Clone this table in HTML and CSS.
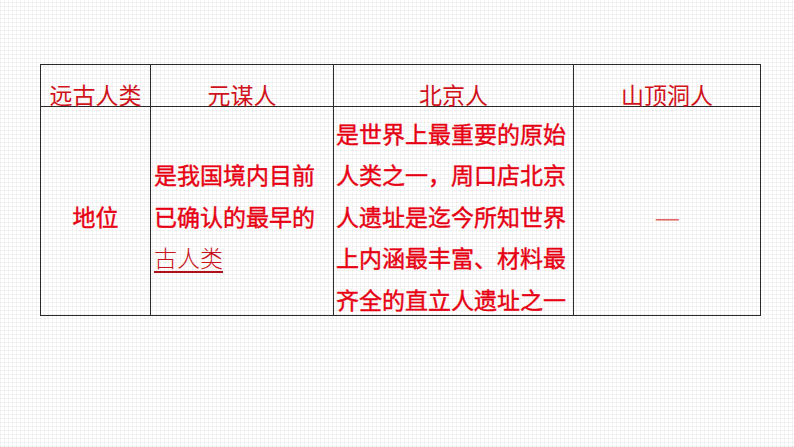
FILE: index.html
```html
<!DOCTYPE html>
<html lang="zh-CN">
<head>
<meta charset="utf-8">
<title>远古人类</title>
<link rel="stylesheet" href="styles.css">
</head>
<body>
<div class="page">
  <div class="grid-table">
    <div class="cell head">远古人类</div>
    <div class="cell head">元谋人</div>
    <div class="cell head">北京人</div>
    <div class="cell head">山顶洞人</div>

    <div class="cell body center"><span class="txt">地位</span></div>
    <div class="cell body yuanmou"><p class="txt">是我国境内目前<br>已确认的最早的<br><span class="answer">古人类</span></p></div>
    <div class="cell body beijing"><p class="txt">是世界上最重要的原始人类之一，周口店北京人遗址是迄今所知世界上内涵最丰富、材料最齐全的直立人遗址之一</p></div>
    <div class="cell body center"><span class="dash">—</span></div>
  </div>
</div>
</body>
</html>
```
FILE: styles.css
```css
html, body {
  margin: 0;
  padding: 0;
}
body {
  width: 794px;
  height: 447px;
  overflow: hidden;
  background-color: #ffffff;
  background-image:
    repeating-linear-gradient(0deg, rgba(0,0,0,0.045) 0 1px, transparent 1px 4px),
    repeating-linear-gradient(90deg, rgba(0,0,0,0.045) 0 1px, transparent 1px 4px);
  font-family: "Noto Sans CJK SC", "Noto Sans", sans-serif;
}
.page {
  padding: 64px 0 0 40px;
}
.grid-table {
  display: grid;
  grid-template-columns: 110px 183px 240px 187px;
  grid-template-rows: 42px 209px;
  width: 720px;
  border-left: 1px solid #2a2a2a;
  border-top: 1px solid #2a2a2a;
}
.cell {
  box-sizing: border-box;
  border-right: 1px solid #2a2a2a;
  border-bottom: 1px solid #2a2a2a;
  display: flex;
  align-items: center;
  min-width: 0;
}
.head {
  justify-content: center;
  padding-top: 16px;
  font-size: 23px;
  line-height: 26px;
  color: #d0121b;
  font-weight: 400;
}
.body {
  padding-top: 11px;
  font-size: 23px;
  line-height: 41.5px;
  color: #e60012;
  font-weight: 400;
  -webkit-text-stroke: 0.4px #e60012;
}
.body .txt {
  margin: 0;
}
.center {
  justify-content: center;
}
.yuanmou {
  padding-left: 3px;
}
.beijing {
  padding-left: 2px;
  padding-right: 1px;
}
.answer {
  font-weight: 300;
  color: #c8141e;
  -webkit-text-stroke: 0;
  text-decoration: underline;
  text-decoration-color: #b0101a;
  text-decoration-thickness: 1.5px;
  text-underline-offset: 4px;
}
.dash {
  display: inline-block;
  font-weight: 400;
  color: #e06464;
  -webkit-text-stroke: 0;
  font-size: 23px;
  transform: scaleX(1.25);
}
```
